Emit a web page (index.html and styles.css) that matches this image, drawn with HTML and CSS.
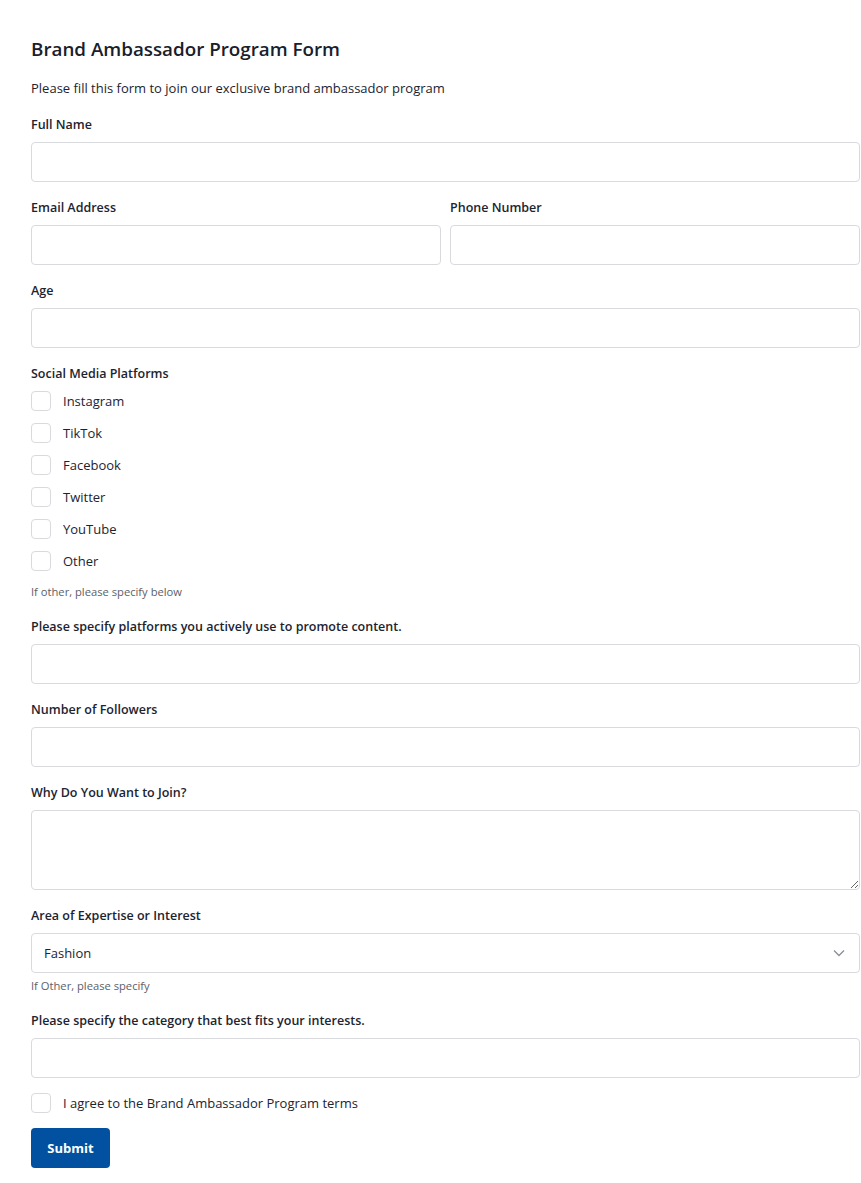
FILE: index.html
```html
<!DOCTYPE html>
<html lang="en">
<head>
<meta charset="utf-8">
<title>Brand Ambassador Program Form</title>
<link rel="stylesheet" href="styles.css">
</head>
<body>
<form class="form">
  <h1 class="title">Brand Ambassador Program Form</h1>
  <p class="subtitle">Please fill this form to join our exclusive brand ambassador program</p>

  <div class="field first">
    <label class="label">Full Name</label>
    <input class="input" type="text">
  </div>

  <div class="row">
    <div class="col">
      <label class="label">Email Address</label>
      <input class="input" type="email">
    </div>
    <div class="col">
      <label class="label">Phone Number</label>
      <input class="input" type="tel">
    </div>
  </div>

  <div class="field">
    <label class="label">Age</label>
    <input class="input" type="number">
  </div>

  <div class="field">
    <label class="label">Social Media Platforms</label>
    <div class="checks">
      <label class="check"><span class="box"></span>Instagram</label>
      <label class="check"><span class="box"></span>TikTok</label>
      <label class="check"><span class="box"></span>Facebook</label>
      <label class="check"><span class="box"></span>Twitter</label>
      <label class="check"><span class="box"></span>YouTube</label>
      <label class="check"><span class="box"></span>Other</label>
    </div>
    <div class="help">If other, please specify below</div>
  </div>

  <div class="field after-help">
    <label class="label">Please specify platforms you actively use to promote content.</label>
    <input class="input" type="text">
  </div>

  <div class="field">
    <label class="label">Number of Followers</label>
    <input class="input" type="text">
  </div>

  <div class="field">
    <label class="label">Why Do You Want to Join?</label>
    <textarea class="input textarea"></textarea>
  </div>

  <div class="field">
    <label class="label">Area of Expertise or Interest</label>
    <div class="select">
      <span>Fashion</span>
      <svg class="chev" width="12" height="8" viewBox="0 0 12 8"><path d="M1 1.5 6 6.5 11 1.5" fill="none" stroke="#8a8f96" stroke-width="1.3"/></svg>
    </div>
    <div class="help help-sel">If Other, please specify</div>
  </div>

  <div class="field after-help">
    <label class="label">Please specify the category that best fits your interests.</label>
    <input class="input" type="text">
  </div>

  <label class="check agree"><span class="box"></span>I agree to the Brand Ambassador Program terms</label>

  <button class="submit" type="button">Submit</button>
</form>
</body>
</html>
```
FILE: styles.css
```css
* { box-sizing: border-box; }
html, body { margin: 0; padding: 0; background: #fff; }
body {
  font-family: "Open Sans", "Noto Sans", sans-serif;
  color: #1c2430;
  font-size: 13px;
}
.form {
  padding: 36px 1px 16px 31px;
  display: flex;
  flex-direction: column;
}
.title {
  font-size: 18.8px;
  font-weight: 600;
  margin: 0;
  line-height: 26px;
  color: #18202c;
}
.subtitle {
  margin: 17px 0 0;
  line-height: 18px;
  font-size: 13px;
}
.field, .col {
  display: flex;
  flex-direction: column;
}
.field { margin-top: 17px; }
.field.first { margin-top: 19px; }
.field.after-help { margin-top: 19px; }
.row {
  display: grid;
  grid-template-columns: 1fr 1fr;
  gap: 9px;
  margin-top: 17px;
}
.label {
  font-weight: 600;
  font-size: 12.5px;
  line-height: 18px;
  margin-bottom: 8px;
}
.input {
  height: 40px;
  border: 1px solid #d8dadd;
  border-radius: 4px;
  background: #fff;
  font: inherit;
  padding: 0 12px;
  outline: none;
}
.textarea { height: 80px; resize: vertical; padding: 8px 12px; }
.checks { display: flex; flex-direction: column; gap: 12px; }
.check {
  display: flex;
  align-items: center;
  gap: 12px;
  line-height: 20px;
  font-size: 13px;
}
.box {
  width: 20px;
  height: 20px;
  border: 1px solid #d8dadd;
  border-radius: 4px;
  flex: none;
}
.help {
  font-size: 11.2px;
  color: #5b6168;
  line-height: 15px;
  margin-top: 13px;
}
.help-sel { margin-top: 5px; }
.select {
  height: 40px;
  border: 1px solid #d8dadd;
  border-radius: 4px;
  display: flex;
  align-items: center;
  justify-content: space-between;
  padding: 0 14px 0 12px;
}
.agree { margin-top: 15px; }
.submit {
  margin-top: 15px;
  align-self: flex-start;
  width: 79px;
  height: 40px;
  background: #0151a0;
  color: #fff;
  border: none;
  border-radius: 4px;
  font: inherit;
  font-weight: 700;
  font-size: 13px;
}
```
